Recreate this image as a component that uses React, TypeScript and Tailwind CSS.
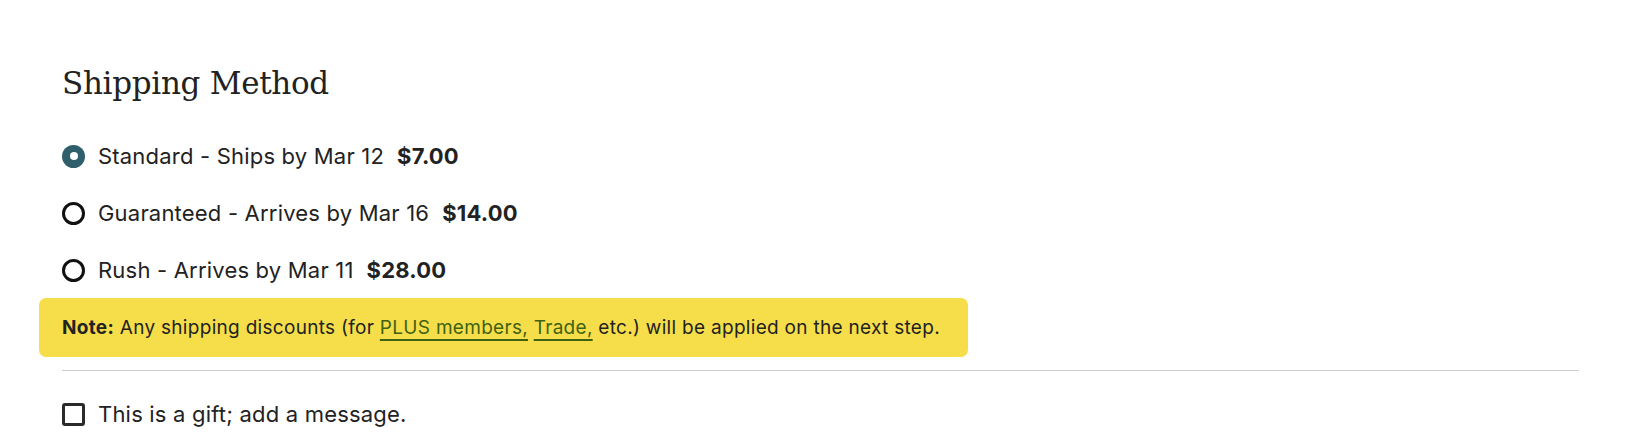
import { useState } from "react";

const options = [
  { id: "standard", label: "Standard - Ships by Mar 12", price: "$7.00" },
  { id: "guaranteed", label: "Guaranteed - Arrives by Mar 16", price: "$14.00" },
  { id: "rush", label: "Rush - Arrives by Mar 11", price: "$28.00" },
];

export default function App() {
  const [method, setMethod] = useState("standard");
  const [gift, setGift] = useState(false);

  return (
    <div className="min-h-screen bg-white text-[#222] font-['Inter',sans-serif]">
      <div className="pl-[62px] pr-[55px] pt-[63px]">
        <h2 className="font-['DejaVu_Serif',serif] text-[31px] leading-[40px] font-normal tracking-[-0.3px]">
          Shipping Method
        </h2>

        <div className="mt-[37px] flex flex-col gap-[25px]">
          {options.map((o) => {
            const checked = method === o.id;
            return (
              <label
                key={o.id}
                className="flex items-center gap-[13px] h-[32px] cursor-pointer"
                onClick={() => setMethod(o.id)}
              >
                {checked ? (
                  <span className="w-[23px] h-[23px] rounded-full bg-[#2f5f6b] flex items-center justify-center">
                    <span className="w-[8px] h-[8px] rounded-full bg-white" />
                  </span>
                ) : (
                  <span className="w-[23px] h-[23px] rounded-full border-[3px] border-[#111]" />
                )}
                <span className="text-[22px] leading-[32px] tracking-[0.2px]">
                  {o.label}
                  <span className="font-bold ml-[13px]">{o.price}</span>
                </span>
              </label>
            );
          })}
        </div>

        <div className="mt-[12px] -ml-[23px] w-[929px] rounded-[7px] bg-[#f6de4a] px-[23px] py-[16px] text-[19px] leading-[27px] tracking-[0.3px] whitespace-nowrap">
          <span className="font-bold">Note:</span> Any shipping discounts (for{" "}
          <a href="#" className="text-[#3f6212] underline decoration-[2px] underline-offset-[5px] decoration-[#3f6212]">
            PLUS members,
          </a>{" "}
          <a href="#" className="text-[#3f6212] underline decoration-[2px] underline-offset-[5px] decoration-[#3f6212]">
            Trade,
          </a>{" "}
          etc.) will be applied on the next step.
        </div>

        <div className="mt-[13px] border-t border-[#cccccc]" />

        <label
          className="mt-[27px] flex items-center gap-[13px] h-[32px] cursor-pointer"
          onClick={() => setGift(!gift)}
        >
          <span className="w-[23px] h-[23px] rounded-[3px] border-[3px] border-[#2a2a2a] bg-white" />
          <span className="text-[22px] leading-[32px] tracking-[0.2px]">This is a gift; add a message.</span>
        </label>
      </div>
    </div>
  );
}
